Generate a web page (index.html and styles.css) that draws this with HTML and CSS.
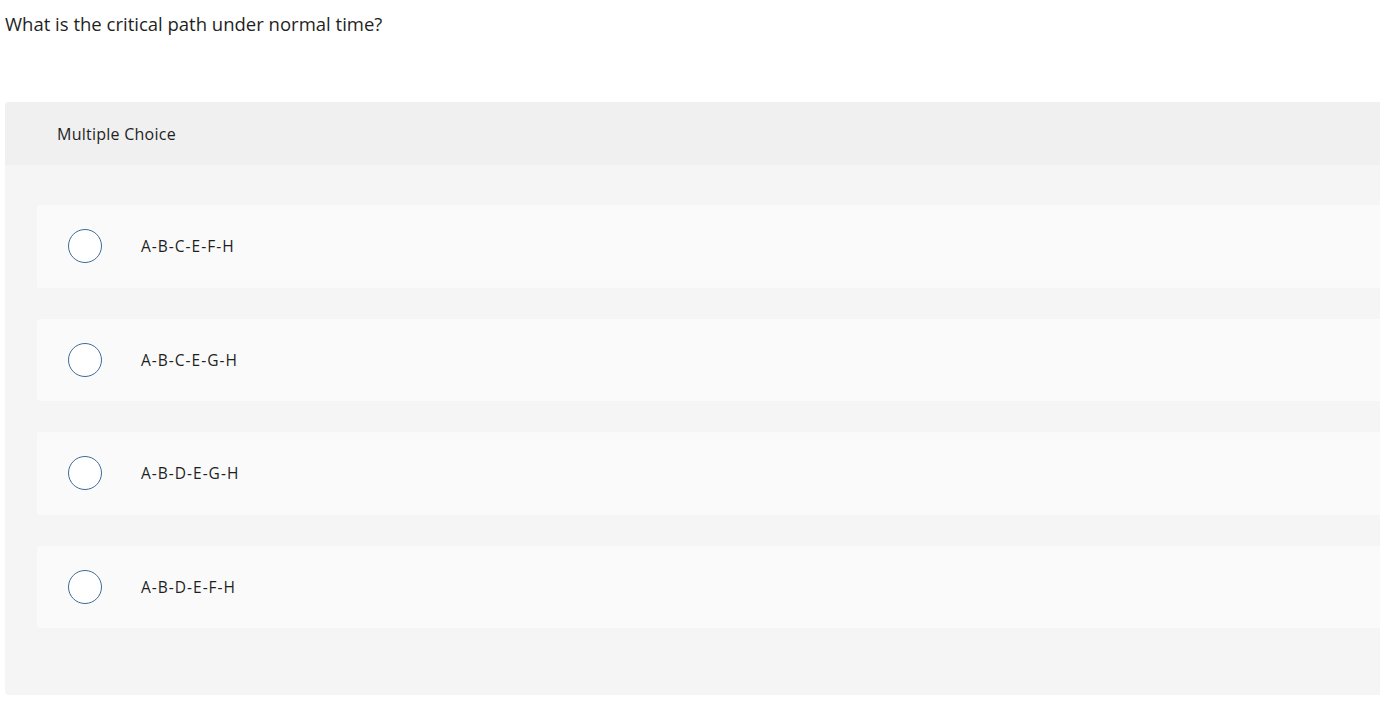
FILE: index.html
```html
<!DOCTYPE html>
<html>
<head>
<meta charset="utf-8">
<link rel="stylesheet" href="styles.css">
</head>
<body>
<div class="page">
  <p class="question">What is the critical path under normal time?</p>
  <div class="mc">
    <div class="mc-head">Multiple Choice</div>
    <div class="mc-body">
      <div class="opt"><span class="radio"></span><span class="label">A-B-C-E-F-H</span></div>
      <div class="opt"><span class="radio"></span><span class="label">A-B-C-E-G-H</span></div>
      <div class="opt"><span class="radio"></span><span class="label">A-B-D-E-G-H</span></div>
      <div class="opt"><span class="radio"></span><span class="label">A-B-D-E-F-H</span></div>
    </div>
  </div>
</div>
</body>
</html>
```
FILE: styles.css
```css
html, body {
  margin: 0;
  padding: 0;
  background: #ffffff;
  overflow: hidden;
}
.page {
  width: 1400px;
  padding-left: 5px;
  font-family: "Open Sans", "Lato", sans-serif;
  color: #1f1f1f;
}
.question {
  margin: 0;
  padding-top: 11px;
  font-size: 18.5px;
  line-height: 26px;
  height: 102px;
  box-sizing: border-box;
}
.mc {
  border-radius: 4px;
  overflow: hidden;
  background: #f5f5f5;
}
.mc-head {
  background: #f0f0f0;
  height: 63px;
  display: flex;
  align-items: center;
  padding-left: 52px;
  font-size: 16px;
  letter-spacing: 0.25px;
}
.mc-body {
  padding: 40px 0 67px 32px;
  display: flex;
  flex-direction: column;
  gap: 31px;
}
.opt {
  background: #fafafa;
  height: 82.5px;
  border-radius: 3px;
  display: flex;
  align-items: center;
  padding-left: 31px;
}
.radio {
  width: 32px;
  height: 32px;
  border: 1.5px solid #3d6b99;
  border-radius: 50%;
  background: #ffffff;
  flex: none;
}
.label {
  margin-left: 39px;
  font-size: 15.5px;
  letter-spacing: 1px;
  color: #1f1f1f;
}
```
